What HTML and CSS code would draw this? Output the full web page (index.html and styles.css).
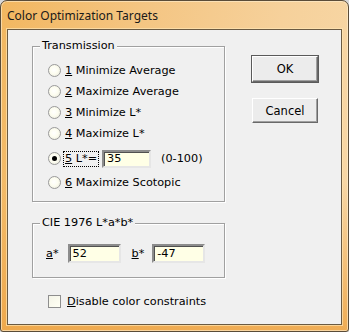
FILE: index.html
```html
<!DOCTYPE html>
<html>
<head>
<meta charset="utf-8">
<link rel="stylesheet" href="styles.css">
</head>
<body>
<div class="window">
  <div class="titlebar">Color Optimization Targets</div>
  <div class="client">
    <div class="left">
      <div class="group group-trans">
        <span class="group-title">Transmission</span>
        <div class="row"><span class="radio"></span><span class="lbl"><u>1</u> Minimize Average</span></div>
        <div class="row"><span class="radio"></span><span class="lbl"><u>2</u> Maximize Average</span></div>
        <div class="row"><span class="radio"></span><span class="lbl"><u>3</u> Minimize L*</span></div>
        <div class="row"><span class="radio"></span><span class="lbl"><u>4</u> Maximize L*</span></div>
        <div class="row row5"><span class="radio checked"></span><span class="lbl focus"><u>5</u> L*=</span><span class="edit edit-l">35</span><span class="range">(0-100)</span></div>
        <div class="row row6"><span class="radio"></span><span class="lbl"><u>6</u> Maximize Scotopic</span></div>
      </div>
      <div class="group group-cie">
        <span class="group-title">CIE 1976 L*a*b*</span>
        <div class="cie-row">
          <span class="lbl-a"><u>a</u>*</span><span class="edit edit-ab">52</span>
          <span class="lbl-b"><u>b</u>*</span><span class="edit edit-ab">-47</span>
        </div>
      </div>
      <div class="check-row"><span class="checkbox"></span><span class="lbl"><u>D</u>isable color constraints</span></div>
    </div>
    <div class="right">
      <div class="btn btn-default">OK</div>
      <div class="btn btn-cancel">Cancel</div>
    </div>
  </div>
</div>
</body>
</html>
```

FILE: styles.css
```css
* { box-sizing: border-box; }
html, body { margin: 0; padding: 0; background: #d8d8d8; }
body { width: 349px; height: 332px; overflow: hidden; }

.window {
  width: 349px;
  height: 332px;
  border: 1px solid #5a4c38;
  border-radius: 7px 7px 3px 3px;
  background:
    linear-gradient(to bottom, rgba(238, 165, 70, 0) 0%, rgba(238, 165, 70, 0) 55%, rgba(238, 165, 70, 0.85) 100%),
    linear-gradient(100deg, #f2b760 0%, #f4c582 35%, #f6d19b 70%, #f7d8a8 100%);
  display: flex;
  flex-direction: column;
  box-shadow: inset 0 0 0 1px rgba(255, 240, 210, 0.6);
}

.titlebar {
  height: 28px;
  flex: none;
  padding: 5px 0 0 6px;
  font-family: "Noto Sans", "Open Sans", sans-serif;
  font-size: 12px;
  line-height: 19px;
  color: #1a1a1a;
}

.client {
  margin: 0 6px;
  height: 296px;
  flex: none;
  border: 1px solid #6a5a42;
  background: #f0f0f0;
  display: flex;
  align-items: flex-start;
  font-family: "DejaVu Sans", Verdana, sans-serif;
  font-size: 11.25px;
  color: #000;
  box-shadow: 0 0 0 1px rgba(255, 230, 180, 0.7);
}

.left {
  margin-left: 24px;
  margin-top: 16px;
  width: 193px;
  display: flex;
  flex-direction: column;
}

.group {
  position: relative;
  border: 1px solid #a0a0a0;
  box-shadow: 1px 1px 0 #fff, inset 1px 1px 0 #fff;
}

.group-title {
  position: absolute;
  top: -8px;
  left: 7px;
  padding: 0 2px;
  background: #f0f0f0;
  line-height: 14px;
  white-space: nowrap;
}

.group-trans {
  height: 156px;
  padding-top: 13px;
}

.row {
  height: 21px;
  display: flex;
  align-items: center;
  padding-left: 15px;
  white-space: nowrap;
}

.row5 { height: 25px; margin-top: 2px; }
.row6 { margin-top: 1px; }

.radio {
  width: 13px;
  height: 13px;
  border-radius: 50%;
  border: 1px solid #9a9a9a;
  background: radial-gradient(circle at 45% 45%, #ffffff 0%, #fdfdf0 45%, #e4e4d6 100%);
  margin-right: 4px;
  flex: none;
  position: relative;
}

.radio.checked::after {
  content: "";
  position: absolute;
  left: 3px;
  top: 3px;
  width: 5px;
  height: 5px;
  border-radius: 50%;
  background: #000;
}

.lbl { line-height: 13px; }

.focus {
  outline: 1px dotted #000;
  outline-offset: 0;
  padding: 0 1px;
  margin-left: -1px;
  height: 14px;
}

.edit {
  display: flex;
  align-items: center;
  background: #ffffe6;
  border: 2px solid;
  border-color: #8c8c8c #e6e6e6 #e6e6e6 #8c8c8c;
  box-shadow: inset 1px 1px 0 #505050;
  padding-left: 3px;
  line-height: 13px;
  flex: none;
}

.edit-l {
  width: 49px;
  height: 18px;
  margin-left: 4px;
}

.range { margin-left: 10px; }

.group-cie {
  margin-top: 21px;
  height: 55px;
  padding-top: 20px;
}

.cie-row {
  display: flex;
  align-items: center;
  height: 19px;
  padding-left: 13px;
  white-space: nowrap;
}

.edit-ab {
  width: 53px;
  height: 19px;
}

.lbl-a { margin-right: 9px; }
.lbl-b { margin-left: 11px; margin-right: 8px; }

.check-row {
  margin-top: 17px;
  padding-left: 16px;
  display: flex;
  align-items: center;
  height: 13px;
  white-space: nowrap;
}

.checkbox {
  width: 13px;
  height: 13px;
  border: 1px solid #8e8e8e;
  background: linear-gradient(135deg, #f4f4e8, #fffff4);
  margin-right: 6px;
  flex: none;
}

.right {
  margin-left: 27px;
  margin-top: 26px;
  display: flex;
  flex-direction: column;
}

.btn {
  width: 66px;
  display: flex;
  align-items: center;
  justify-content: center;
  font-family: "DejaVu Sans", Verdana, sans-serif;
  font-size: 11.5px;
  background: #ececec;
  border: 1px solid;
  border-color: #ffffff #696969 #696969 #ffffff;
  box-shadow: inset -1px -1px 0 #a0a0a0;
}

.btn-default {
  height: 26px;
  outline: 1px solid #5a5a5a;
  outline-offset: 0;
}

.btn-cancel {
  height: 25px;
  margin-top: 16px;
}
```
